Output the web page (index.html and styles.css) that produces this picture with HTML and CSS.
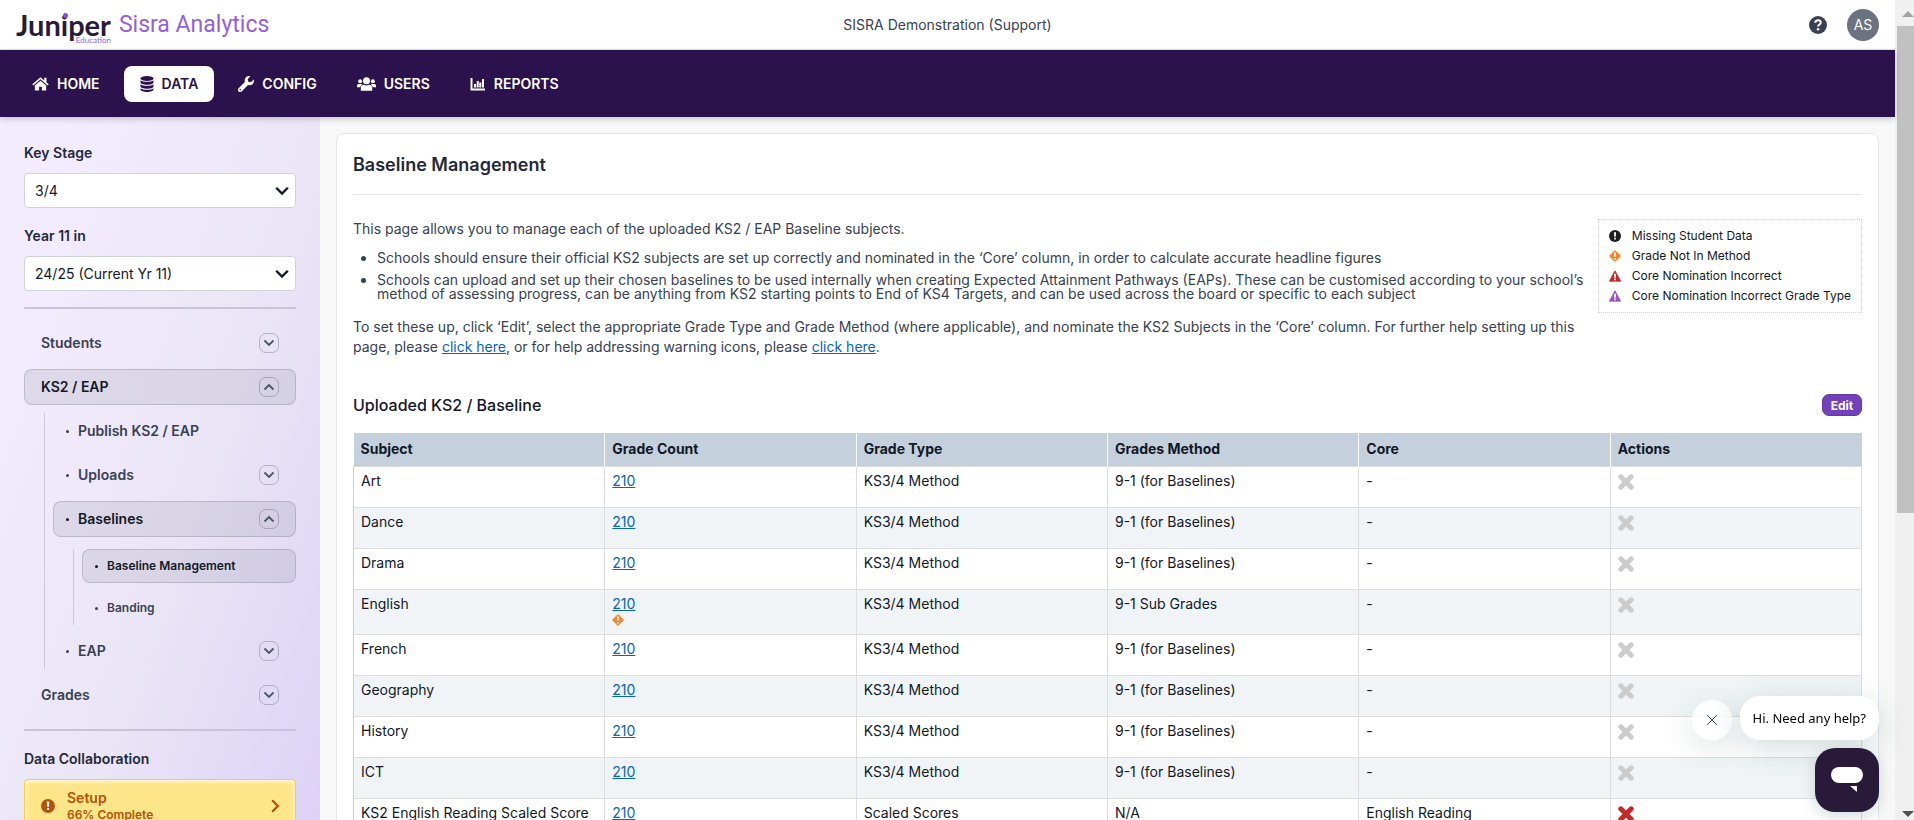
FILE: index.html
```html
<!DOCTYPE html>
<html lang="en">
<head>
  <meta charset="utf-8">
  <title>Baseline Management - Sisra Analytics</title>
  <link rel="stylesheet" href="styles.css">
</head>
<body>
  <!-- shared icons -->
  <svg class="sprite" aria-hidden="true">
    <symbol id="chevron-down" viewBox="0 0 14 14"><path d="M2.5 4.5 7 9l4.5-4.5" fill="none" stroke="currentColor" stroke-width="1.800"/></symbol>
    <symbol id="chevron-up" viewBox="0 0 14 14"><path d="M2.5 9.500 7 5l4.500 4.500" fill="none" stroke="currentColor" stroke-width="1.800"/></symbol>
    <symbol id="warn-circle" viewBox="0 0 14 14"><circle cx="7" cy="7" r="7" fill="currentColor"/><path d="M5.800 2.500h2.400l-.3 5.500H6.100zM6 9h2v2H6z" fill="#fff"/></symbol>
    <symbol id="warn-diamond" viewBox="0 0 14 14"><path d="M7 .5 13.500 7 7 13.500.5 7z" fill="currentColor" stroke="currentColor" stroke-linejoin="round"/><path d="M6 3h2v5H6zM6 9.200h2v2H6z" fill="#fff"/></symbol>
    <symbol id="warn-triangle" viewBox="0 0 14 14"><path d="M7 1 13.500 13H.5z" fill="currentColor" stroke="currentColor" stroke-linejoin="round"/><path d="M6 4.500h2V9H6zM6 10h2v2H6z" fill="#fff"/></symbol>
    <symbol id="cross" viewBox="0 0 16 16"><path d="M2.800 2.800l10.400 10.400M13.200 2.800 2.800 13.200" fill="none" stroke="currentColor" stroke-width="5" stroke-linecap="round"/></symbol>
  </svg>

  <div class="app">
    <header class="topbar">
      <a class="logo" href="#">
        <span class="logo-name">Juniper<small>Education</small></span>
        <span class="logo-product">Sisra Analytics</span>
      </a>
      <div class="school">SISRA Demonstration (Support)</div>
      <div class="account">
        <button class="help" aria-label="Help">
          <svg viewBox="0 0 18 18" width="18" height="18"><circle cx="9" cy="9" r="9" fill="#374151"/><path d="M6.200 6.800C6.300 5 7.400 4.200 9 4.200s2.800.9 2.800 2.400c0 2.100-2.700 1.900-2.700 4" fill="none" stroke="#fff" stroke-width="2"/><circle cx="9.100" cy="13.200" r="1.300" fill="#fff"/></svg>
        </button>
        <button class="avatar">AS</button>
      </div>
    </header>

    <nav class="mainnav">
      <a href="#"><svg viewBox="0 0 18 16" width="17" height="16"><path d="M9 .8.300 8.200l1.100 1.300L9 3.100l7.600 6.400 1.100-1.300-2.400-2V1.500H13v2.700z" fill="currentColor"/><path d="M9 4.500 3 9.500V15h4.500v-4h3v4H15V9.500z" fill="currentColor"/></svg>HOME</a>
      <a href="#" class="active"><svg viewBox="0 0 14 16" width="14" height="16"><ellipse cx="7" cy="2.500" rx="6.500" ry="2.500" fill="currentColor"/><path d="M.5 4.300c2 2 11 2 13 0v2.200c0 3-13 3-13 0zM.5 8.300c2 2 11 2 13 0v2.200c0 3-13 3-13 0zM.5 12.200c2 2 11 2 13 0v1.300c0 3.300-13 3.300-13 0z" fill="currentColor"/></svg>DATA</a>
      <a href="#"><svg viewBox="0 0 16 16" width="16" height="16"><path d="M15.700 3.600 13 6.200l-2.700-.5-.5-2.700L12.400.300C8.800-.7 5.800 2.500 6.900 6L.6 12.300a1.900 1.900 0 0 0 3.100 3.100L10 9.100c3.400 1.100 6.700-1.900 5.700-5.500z" fill="currentColor"/><circle cx="2.300" cy="13.700" r=".8" fill="#2b124c"/></svg>CONFIG</a>
      <a href="#"><svg viewBox="0 0 20 16" width="19" height="16"><g fill="currentColor"><circle cx="10" cy="4.500" r="3.700"/><circle cx="3.300" cy="5" r="2.100"/><circle cx="16.700" cy="5" r="2.100"/><path d="M4 15v-2.500C4 10 5.500 8.800 7.300 8.800c1.700 1 3.700 1 5.400 0 1.800 0 3.300 1.200 3.300 3.700V15zM0 11.500V10c0-1.300.8-2 2-2h2.500c.5 0 .8.200 1.200.5-1.300.7-2 1.700-2.200 3zM20 11.500V10c0-1.300-.8-2-2-2h-2.500c-.5 0-.8.200-1.200.5 1.300.7 2 1.700 2.200 3z"/></g></svg>USERS</a>
      <a href="#"><svg viewBox="0 0 16 14" width="16" height="14"><path d="M1.500 1v11.500H15M5 10.500V7M7.700 10.500V4M10.300 10.500V5.500M13 10.500V2" fill="none" stroke="currentColor" stroke-width="2"/></svg>REPORTS</a>
    </nav>

    <div class="page">
      <aside class="sidebar">
        <div class="filters">
          <div class="field">
            <label for="key-stage">Key Stage</label>
            <div class="select">
              <select id="key-stage"><option>3/4</option></select>
              <svg width="18" height="18"><use href="#chevron-down"/></svg>
            </div>
          </div>
          <div class="field">
            <label for="year">Year 11 in</label>
            <div class="select">
              <select id="year"><option>24/25 (Current Yr 11)</option></select>
              <svg width="18" height="18"><use href="#chevron-down"/></svg>
            </div>
          </div>
        </div>
        <hr>
        <ul class="menu">
          <li><a href="#">Students<span class="toggle"><svg width="14" height="14"><use href="#chevron-down"/></svg></span></a></li>
          <li>
            <a href="#" class="selected">KS2 / EAP<span class="toggle"><svg width="14" height="14"><use href="#chevron-up"/></svg></span></a>
            <ul class="submenu">
              <li><a href="#">Publish KS2 / EAP</a></li>
              <li><a href="#">Uploads<span class="toggle"><svg width="14" height="14"><use href="#chevron-down"/></svg></span></a></li>
              <li>
                <a href="#" class="selected">Baselines<span class="toggle"><svg width="14" height="14"><use href="#chevron-up"/></svg></span></a>
                <ul class="submenu small">
                  <li><a href="#" class="selected">Baseline Management</a></li>
                  <li><a href="#">Banding</a></li>
                </ul>
              </li>
              <li><a href="#">EAP<span class="toggle"><svg width="14" height="14"><use href="#chevron-down"/></svg></span></a></li>
            </ul>
          </li>
          <li><a href="#">Grades<span class="toggle"><svg width="14" height="14"><use href="#chevron-down"/></svg></span></a></li>
        </ul>
        <hr>
        <h3>Data Collaboration</h3>
        <a href="#" class="setup">
          <svg width="14" height="14"><use href="#warn-circle"/></svg>
          <span class="setup-text">Setup<small>66% Complete</small></span>
          <svg viewBox="0 0 14 14" width="16" height="16"><path d="M4.500 2 9.500 7l-5 5" fill="none" stroke="currentColor" stroke-width="2"/></svg>
        </a>
      </aside>

      <main>
        <div class="card">
          <h1>Baseline Management</h1>
          <div class="intro">
            <div class="intro-text">
              <p>This page allows you to manage each of the uploaded KS2 / EAP Baseline subjects.</p>
              <ul>
                <li>Schools should ensure their official KS2 subjects are set up correctly and nominated in the ‘Core’ column, in order to calculate accurate headline figures</li>
                <li>Schools can upload and set up their chosen baselines to be used internally when creating Expected Attainment Pathways (EAPs). These can be customised according to your school’s method of assessing progress, can be anything from KS2 starting points to End of KS4 Targets, and can be used across the board or specific to each subject</li>
              </ul>
              <p>To set these up, click ‘Edit’, select the appropriate Grade Type and Grade Method (where applicable), and nominate the KS2 Subjects in the ‘Core’ column. For further help setting up this page, please <a href="#">click here</a>, or for help addressing warning icons, please <a href="#">click here</a>.</p>
            </div>
            <ul class="legend">
              <li><svg class="black" width="12" height="12"><use href="#warn-circle"/></svg>Missing Student Data</li>
              <li><svg class="orange" width="12" height="12"><use href="#warn-diamond"/></svg>Grade Not In Method</li>
              <li><svg class="red" width="12" height="12"><use href="#warn-triangle"/></svg>Core Nomination Incorrect</li>
              <li><svg class="purple" width="12" height="12"><use href="#warn-triangle"/></svg>Core Nomination Incorrect Grade Type</li>
            </ul>
          </div>

          <div class="section-head">
            <h2>Uploaded KS2 / Baseline</h2>
            <button class="edit">Edit</button>
          </div>
          <table>
            <thead>
              <tr><th>Subject</th><th>Grade Count</th><th>Grade Type</th><th>Grades Method</th><th>Core</th><th>Actions</th></tr>
            </thead>
            <tbody>
              <tr><td>Art</td><td><a href="#">210</a></td><td>KS3/4 Method</td><td>9-1 (for Baselines)</td><td>-</td><td><svg class="delete" width="16" height="16"><use href="#cross"/></svg></td></tr>
              <tr><td>Dance</td><td><a href="#">210</a></td><td>KS3/4 Method</td><td>9-1 (for Baselines)</td><td>-</td><td><svg class="delete" width="16" height="16"><use href="#cross"/></svg></td></tr>
              <tr><td>Drama</td><td><a href="#">210</a></td><td>KS3/4 Method</td><td>9-1 (for Baselines)</td><td>-</td><td><svg class="delete" width="16" height="16"><use href="#cross"/></svg></td></tr>
              <tr><td>English</td><td><a href="#">210</a><svg class="flag orange" width="12" height="12"><use href="#warn-diamond"/></svg></td><td>KS3/4 Method</td><td>9-1 Sub Grades</td><td>-</td><td><svg class="delete" width="16" height="16"><use href="#cross"/></svg></td></tr>
              <tr><td>French</td><td><a href="#">210</a></td><td>KS3/4 Method</td><td>9-1 (for Baselines)</td><td>-</td><td><svg class="delete" width="16" height="16"><use href="#cross"/></svg></td></tr>
              <tr><td>Geography</td><td><a href="#">210</a></td><td>KS3/4 Method</td><td>9-1 (for Baselines)</td><td>-</td><td><svg class="delete" width="16" height="16"><use href="#cross"/></svg></td></tr>
              <tr><td>History</td><td><a href="#">210</a></td><td>KS3/4 Method</td><td>9-1 (for Baselines)</td><td>-</td><td><svg class="delete" width="16" height="16"><use href="#cross"/></svg></td></tr>
              <tr><td>ICT</td><td><a href="#">210</a></td><td>KS3/4 Method</td><td>9-1 (for Baselines)</td><td>-</td><td><svg class="delete" width="16" height="16"><use href="#cross"/></svg></td></tr>
              <tr><td>KS2 English Reading Scaled Score</td><td><a href="#">210</a></td><td>Scaled Scores</td><td>N/A</td><td>English Reading</td><td><svg class="delete red" width="16" height="16"><use href="#cross"/></svg></td></tr>
            </tbody>
          </table>
        </div>
      </main>
    </div>

    <div class="chat">
      <div class="chat-prompt">
        <button class="chat-close" aria-label="Close"><svg viewBox="0 0 12 12" width="12" height="12"><path d="M1 1l10 10M11 1 1 11" stroke="#4b5563" fill="none"/></svg></button>
        <button class="chat-bubble">Hi. Need any help?</button>
      </div>
      <button class="chat-launcher" aria-label="Open chat">
        <svg viewBox="0 0 32 26" width="32" height="26"><rect width="32" height="16" rx="8" fill="#fff"/><path d="M19 19h7v6z" fill="#fff"/></svg>
      </button>
    </div>
  </div>

  <div class="scrollbar" aria-hidden="true">
    <svg viewBox="0 0 12 6" width="12" height="6"><path d="M0 6 6 0l6 6z" fill="#a3a3a3"/></svg>
    <div class="track"><div class="thumb"></div></div>
    <svg viewBox="0 0 12 6" width="12" height="6"><path d="M0 0h12L6 6z" fill="#505050"/></svg>
  </div>
</body>
</html>
```

FILE: styles.css
```css
* {
  box-sizing: border-box;
}

body {
  margin: 0;
  height: 100vh;
  display: flex;
  overflow: hidden;
  font-family: Inter, "Liberation Sans", sans-serif;
  font-size: 14px;
  line-height: 20px;
  color: #111827;
  background: #f8f8f8;
}

ul {
  list-style: none;
  margin: 0;
  padding: 0;
}

a {
  color: #0563c1;
}

svg {
  flex-shrink: 0;
}

button {
  font-family: inherit;
  border: none;
  padding: 0;
  cursor: pointer;
}

.sprite {
  display: none;
}

.app {
  flex: 1;
  min-width: 0;
  display: flex;
  flex-direction: column;
}

/* top bar */
.topbar {
  display: grid;
  grid-template-columns: 1fr auto 1fr;
  align-items: center;
  height: 50px;
  padding: 0 16px;
  background: #fff;
  border-bottom: 1px solid #e5e1ec;
  flex-shrink: 0;
}

.logo {
  display: flex;
  align-items: center;
  gap: 8px;
  text-decoration: none;
}

.logo-name {
  position: relative;
  font-family: Lato, sans-serif;
  font-size: 29px;
  font-weight: 700;
  line-height: 30px;
  color: #291a3a;
}

/* dot of the i */
.logo-name::after {
  content: "";
  position: absolute;
  left: 47px;
  top: 3px;
  width: 5px;
  height: 5px;
  border-radius: 50%;
  background: #8b46ff;
}

.logo-name small {
  position: absolute;
  right: 0;
  bottom: -4px;
  font-family: Lato, sans-serif;
  font-size: 8px;
  font-weight: 400;
  line-height: 8px;
  color: #9061f9;
}

.logo-product {
  font-family: Roboto, sans-serif;
  font-size: 23px;
  font-weight: 400;
  line-height: 32px;
  color: #9560dc;
}

.school {
  color: #374151;
}

.account {
  display: flex;
  justify-content: flex-end;
  align-items: center;
  gap: 20px;
}

.help {
  display: flex;
  background: none;
}

.avatar {
  width: 32px;
  height: 32px;
  border-radius: 50%;
  background: #6b7280;
  color: #fff;
  font-size: 14px;
}

/* main navigation */
.mainnav {
  display: flex;
  align-items: center;
  gap: 8px;
  height: 67px;
  padding: 0 16px;
  background: #2b124c;
  box-shadow: 0 2px 6px rgba(0, 0, 0, 0.2);
  flex-shrink: 0;
  z-index: 1;
}

.mainnav a {
  display: flex;
  align-items: center;
  gap: 8px;
  height: 36px;
  padding: 0 16px;
  border-radius: 8px;
  color: #fff;
  font-weight: 600;
  text-decoration: none;
}

.mainnav a.active {
  background: #fff;
  color: #2b124c;
}

.page {
  flex: 1;
  min-height: 0;
  display: flex;
}

/* sidebar */
.sidebar {
  width: 320px;
  flex-shrink: 0;
  padding: 26px 24px;
  overflow: hidden;
  background: linear-gradient(110deg, #f3ecfe 10%, #ebe6f6 55%, #ddd2f6);
}

.filters {
  display: flex;
  flex-direction: column;
  gap: 18px;
}

.sidebar label,
.sidebar h3 {
  display: block;
  margin: 0 0 10px;
  font-size: 14px;
  font-weight: 600;
  color: #1f2937;
}

.sidebar h3 {
  margin-top: 18px;
}

.select {
  position: relative;
}

.select select {
  display: block;
  width: 100%;
  height: 35px;
  padding: 0 10px;
  appearance: none;
  border: 1px solid #d1d5db;
  border-radius: 4px;
  background: #fff;
  color: #111827;
  font-family: inherit;
  font-size: 14px;
}

.select svg {
  position: absolute;
  right: 5px;
  top: 9px;
  pointer-events: none;
}

.sidebar hr {
  height: 2px;
  margin: 16px 0;
  border: none;
  background: #c9c3d9;
}

.menu,
.submenu {
  display: flex;
  flex-direction: column;
  gap: 8px;
}

.menu a {
  display: flex;
  align-items: center;
  height: 36px;
  padding: 0 16px;
  border: 1px solid transparent;
  border-radius: 8px;
  color: #374151;
  font-weight: 600;
  text-decoration: none;
}

.menu a.selected {
  color: #111827;
  border-color: rgba(55, 65, 81, 0.2);
  background: rgba(55, 65, 81, 0.1);
}

.toggle {
  display: flex;
  align-items: center;
  justify-content: center;
  width: 20px;
  height: 20px;
  margin-left: auto;
  border: 1px solid rgba(55, 65, 81, 0.3);
  border-radius: 7px;
  color: #4b5563;
}

.submenu {
  margin: 8px 0 0 20px;
  padding-left: 8px;
  border-left: 1px solid #cdc8d8;
}

.submenu a::before {
  content: "";
  width: 3px;
  height: 3px;
  margin: 0 9px 0 -4px;
  border-radius: 50%;
  background: currentColor;
}

.submenu.small {
  margin-top: 12px;
}

.submenu.small a {
  height: 34px;
  font-size: 12px;
}

.setup {
  display: flex;
  align-items: center;
  gap: 12px;
  height: 54px;
  padding: 0 12px 0 16px;
  border: 1px solid #facc45;
  border-radius: 4px;
  background: #fde68a;
  box-shadow: inset 0 1px 4px #fff;
  color: #b45309;
  font-weight: 600;
  text-decoration: none;
}

.setup-text {
  flex: 1;
  line-height: 17px;
}

.setup-text small {
  display: block;
  font-size: 12px;
}

/* content */
main {
  flex: 1;
  min-width: 0;
  padding: 16px;
}

.card {
  padding: 16px;
  min-height: 100%;
  border: 1px solid #e5e7eb;
  border-radius: 8px;
  background: #fff;
}

.card h1 {
  margin: 0;
  padding-bottom: 14px;
  border-bottom: 1px solid #e5e7eb;
  font-size: 18px;
  font-weight: 600;
  line-height: 30px;
  color: #1f2937;
}

.intro {
  display: flex;
  gap: 12px;
  padding-top: 24px;
  align-items: flex-start;
}

.intro-text {
  flex: 1;
  color: #374151;
}

.intro-text p {
  margin: 0;
}

.intro-text ul {
  margin: 12px 0 16px;
  padding-left: 24px;
  list-style: disc;
  line-height: 14px;
}

.intro-text li {
  margin-bottom: 8px;
}

.legend {
  padding: 6px 10px;
  border: 1px dotted #d4d4d4;
  font-size: 12px;
}

.legend li {
  display: flex;
  align-items: center;
  gap: 11px;
}

.black {
  color: #1c1c1c;
}

.orange {
  color: #fb8420;
}

.red {
  color: #c62828;
}

.purple {
  color: #9b51c0;
}

.section-head {
  display: flex;
  justify-content: space-between;
  align-items: center;
  margin: 36px 0 16px;
}

.section-head h2 {
  margin: 0;
  font-size: 16px;
  font-weight: 500;
  line-height: 24px;
}

.edit {
  width: 40px;
  height: 22px;
  border: 1px solid #6636a5;
  border-radius: 7px;
  background: #7541bb;
  color: #fff;
  font-size: 12px;
  font-weight: 700;
}

table {
  width: 100%;
  table-layout: fixed;
  border-collapse: collapse;
}

th {
  height: 33px;
  padding: 0 7px;
  border-right: 1px solid #fff;
  background: #c4d1dc;
  text-align: left;
  font-weight: 700;
}

th:last-child {
  border-right: none;
}

td {
  height: 41px;
  padding: 4px 7px;
  border: 1px solid #dddddd;
  vertical-align: top;
}

td:first-child {
  border-left-color: #c4d1dc;
}

tbody tr:nth-child(even) {
  background: #f0f4f7;
}

td svg {
  display: block;
}

.delete {
  margin-top: 3px;
  color: #cccccc;
}

.delete.red {
  color: #c62828;
}

.flag {
  margin-bottom: 4px;
}

/* chat widget */
.chat {
  position: fixed;
  right: 35px;
  bottom: 8px;
  display: flex;
  flex-direction: column;
  align-items: flex-end;
  gap: 8px;
  z-index: 2;
}

.chat-prompt {
  display: flex;
  align-items: flex-end;
  gap: 8px;
}

.chat-close {
  display: flex;
  align-items: center;
  justify-content: center;
  width: 40px;
  height: 40px;
  border-radius: 50%;
  background: rgba(255, 255, 255, 0.85);
  box-shadow: 0 8px 32px rgba(30, 70, 70, 0.15);
}

.chat-bubble {
  height: 44px;
  padding: 0 13px;
  border-radius: 20px;
  background: #fff;
  box-shadow: 0 8px 32px rgba(30, 70, 70, 0.2);
  color: #000;
  font-family: "Noto Sans", sans-serif;
  font-size: 13px;
}

.chat-launcher {
  display: flex;
  align-items: center;
  justify-content: center;
  width: 64px;
  height: 64px;
  border-radius: 20px;
  background: #291a3a;
  box-shadow: 0 4px 16px rgba(30, 70, 70, 0.2);
}

/* window scrollbar */
.scrollbar {
  display: flex;
  flex-direction: column;
  align-items: center;
  width: 19px;
  padding: 11px 0 3px 6px;
  background: #f0f0f0;
}

.track {
  flex: 1;
  align-self: stretch;
  margin: 9px 0 12px -4px;
}

.thumb {
  height: 63%;
  background: #c1c1c1;
}
```
